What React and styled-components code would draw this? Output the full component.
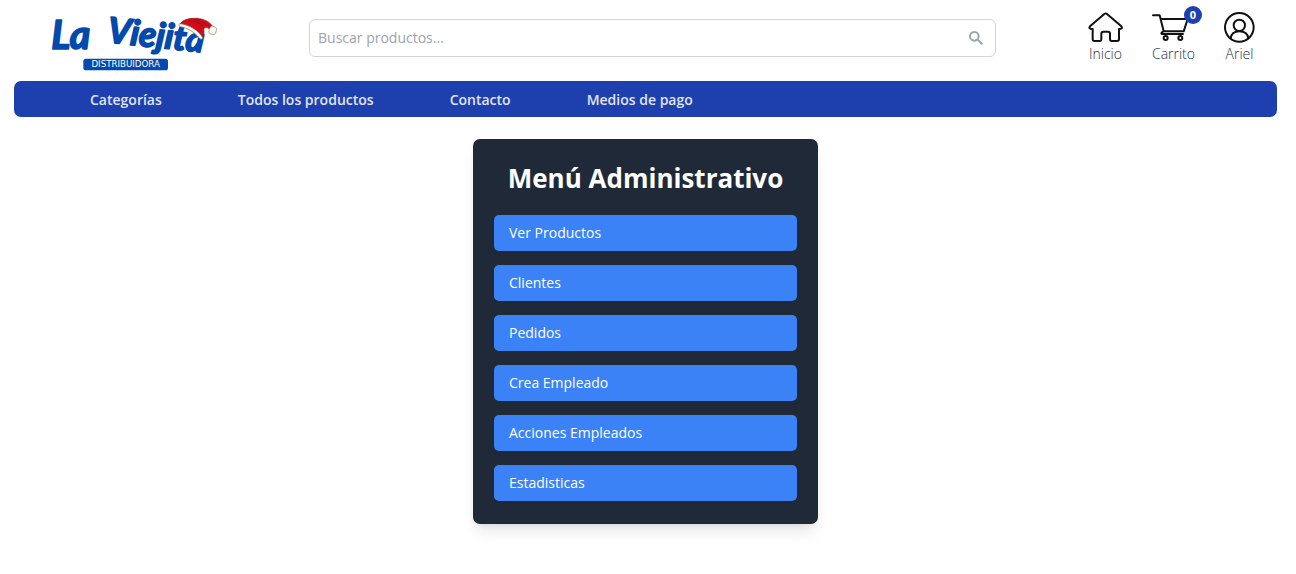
import React from "react";
import styled, { createGlobalStyle } from "styled-components";

const GlobalStyle = createGlobalStyle`
  *, *::before, *::after { box-sizing: border-box; }
  body {
    margin: 0;
    padding: 0 19px 0 14px;
    background: #fff;
    font-family: "Open Sans", "Noto Sans", sans-serif;
    font-size: 14px;
    line-height: 20px;
  }
`;

const Header = styled.header`
  display: flex;
  align-items: flex-start;
  padding: 5px 22px 0 26px;
  height: 81px;
`;

const LogoLink = styled.a`
  display: block;
  flex: none;
  width: 190px;
  height: 75px;
  margin-right: 79px;
`;

const SearchForm = styled.form`
  display: flex;
  flex: 1;
  min-width: 0;
  height: 38px;
  margin: 14px 92px 0 0;
  border: 1px solid #d1d5db;
  border-radius: 6px;
`;

const SearchInput = styled.input`
  flex: 1;
  min-width: 0;
  padding: 0 8px;
  border: 0;
  border-radius: 6px;
  background: transparent;
  color: #374151;
  font: inherit;
  &::placeholder { color: #9ca3af; opacity: 1; }
`;

const SearchButton = styled.button`
  display: flex;
  align-items: center;
  padding: 0 12px;
  border: 0;
  background: transparent;
  cursor: pointer;
`;

const Actions = styled.nav`
  display: flex;
  gap: 29px;
  padding-top: 7px;
`;

const Action = styled.a`
  position: relative;
  display: flex;
  flex-direction: column;
  align-items: ${(p) => p.$align || "center"};
  color: #1f2f46;
  font-weight: 300;
  line-height: 22px;
  text-decoration: none;
`;

const Badge = styled.span`
  position: absolute;
  top: -6px;
  left: 32px;
  width: 18px;
  height: 18px;
  border-radius: 50%;
  background: #1e40af;
  color: #fff;
  font-size: 11px;
  font-weight: 700;
  line-height: 18px;
  text-align: center;
`;

const NavBar = styled.nav`
  display: flex;
  align-items: center;
  gap: 76px;
  height: 36px;
  padding: 2px 76px 0;
  border-radius: 7px;
  background: #1e40af;
`;

const NavLink = styled.a`
  color: #e0e4ee;
  font-weight: 600;
  line-height: 20px;
  text-decoration: none;
`;

const Main = styled.main`
  display: flex;
  justify-content: center;
  padding: 22px 0;
`;

const Card = styled.section`
  width: 345px;
  padding: 22px 21px 23px;
  border-radius: 7px;
  background: #1f2937;
  box-shadow: 0 10px 15px -3px rgba(0, 0, 0, 0.1), 0 4px 6px -4px rgba(0, 0, 0, 0.1);
`;

const Title = styled.h1`
  margin: 0 0 20px;
  color: #fff;
  font-size: 26px;
  font-weight: 700;
  line-height: 34px;
  text-align: center;
`;

const Menu = styled.div`
  display: flex;
  flex-direction: column;
  gap: 14px;
`;

const MenuButton = styled.button`
  height: 36px;
  padding: 0 15px;
  border: 0;
  border-radius: 5px;
  background: #3b82f6;
  color: #fff;
  font: inherit;
  font-weight: 500;
  text-align: left;
  cursor: pointer;
`;

const Logo = () => (
  <svg width="190" height="75" viewBox="0 0 570 225" role="img" aria-label="La Viejita Distribuidora">
    <g fill="#0449ac" stroke="#0449ac" strokeWidth="5" strokeLinejoin="round" fontFamily="Lato, sans-serif" fontStyle="italic" fontWeight="700">
      <text x="34" y="133" fontSize="118">La</text>
      <text x="200" y="112" fontSize="106" transform="rotate(6 200 112)">Viejita</text>
    </g>
    <path d="M419 60 C428 41 455 38 479 41 C501 45 515 56 519 68 L508 72 C500 66 494 67 491 72 C493 83 492 92 486 99 C474 80 452 65 419 60Z" fill="#d20b18" stroke="#8c1118" strokeWidth="2" />
    <path d="M448 51 C466 46 488 55 491 72 M460 45 C479 44 495 55 501 63" fill="none" stroke="#8c1118" strokeWidth="2" />
    <path d="M419 56 C446 58 476 76 488 98 C487 104 481 104 478 99 C463 81 443 69 421 65 C416 62 415 58 419 56Z" fill="#fff8ed" stroke="#77706b" strokeWidth="2" />
    <path d="M510 69 C510 63 518 61 522 65 C529 66 532 73 528 78 C529 86 521 91 516 87 C508 88 504 80 508 76 C506 73 507 70 510 69Z" fill="#fff8ed" stroke="#77706b" strokeWidth="2" />
    <rect x="130" y="161" width="254" height="35" rx="8" fill="#0449ac" />
    <text x="257" y="187" fill="#fff" textAnchor="middle" fontFamily="DejaVu Sans, sans-serif" fontSize="26">DISTRIBUIDORA</text>
  </svg>
);

const SearchIcon = () => (
  <svg width="14" height="14" viewBox="0 0 42 42" fill="none" stroke="#9ca3af" strokeWidth="6" aria-hidden="true">
    <circle cx="16" cy="16" r="13" />
    <path d="M25 25 40 40" />
  </svg>
);

const iconProps = { fill: "none", stroke: "#111", strokeWidth: 6, strokeLinecap: "round", strokeLinejoin: "round", "aria-hidden": true };

const HomeIcon = () => (
  <svg width="35" height="31" viewBox="55 36 105 93" {...iconProps}>
    <path d="M104 42 Q108 39 112 42 L155 79 Q159 84 154 86 L148 87 V118 Q148 123 142 123 H126 Q121 123 121 117 V101 Q121 95 115 95 H101 Q95 95 95 101 V117 Q95 123 90 123 H74 Q69 123 69 117 V87 L62 86 Q57 84 61 79 Z" />
  </svg>
);

const CartIcon = () => (
  <svg width="36" height="31" viewBox="246 36 108 93" {...iconProps}>
    <path d="M249 46 H269 L281 94 H341 L353 57 H273 M281 94 Q272 98 275 102 H339" />
    <circle cx="287" cy="114" r="6" />
    <circle cx="331" cy="114" r="6" />
  </svg>
);

const UserIcon = () => (
  <svg width="31" height="31" viewBox="462 36 93 93" {...iconProps}>
    <circle cx="508" cy="82" r="43" />
    <circle cx="508" cy="76" r="17" />
    <path d="M482 115 C484 101 494 94 508 94 C523 94 533 101 535 115" />
  </svg>
);

const NAV_LINKS = ["Categorías", "Todos los productos", "Contacto", "Medios de pago"];
const MENU_ITEMS = ["Ver Productos", "Clientes", "Pedidos", "Crea Empleado", "Acciones Empleados", "Estadisticas"];

export default function App() {
  return (
    <>
      <GlobalStyle />
      <Header>
        <LogoLink href="#inicio"><Logo /></LogoLink>
        <SearchForm role="search" onSubmit={(e) => e.preventDefault()}>
          <SearchInput type="text" aria-label="Buscar productos" placeholder="Buscar productos..." />
          <SearchButton type="submit" aria-label="Buscar"><SearchIcon /></SearchButton>
        </SearchForm>
        <Actions aria-label="Cuenta">
          <Action href="#inicio"><HomeIcon />Inicio</Action>
          <Action href="#carrito" $align="flex-start"><CartIcon />Carrito<Badge>0</Badge></Action>
          <Action href="#perfil"><UserIcon />Ariel</Action>
        </Actions>
      </Header>
      <NavBar aria-label="Principal">
        {NAV_LINKS.map((label) => <NavLink key={label} href="#">{label}</NavLink>)}
      </NavBar>
      <Main>
        <Card>
          <Title>Menú Administrativo</Title>
          <Menu>
            {MENU_ITEMS.map((label) => <MenuButton key={label} type="button">{label}</MenuButton>)}
          </Menu>
        </Card>
      </Main>
    </>
  );
}
